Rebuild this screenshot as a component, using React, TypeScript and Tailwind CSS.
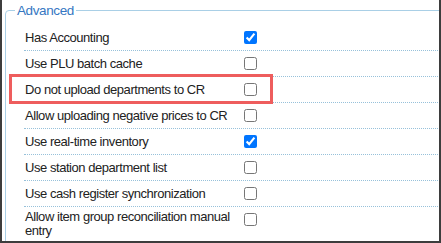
const rows = [
  { label: "Has Accounting", checked: true },
  { label: "Use PLU batch cache", checked: false },
  { label: "Do not upload departments to CR", checked: false, highlight: true },
  { label: "Allow uploading negative prices to CR", checked: false },
  { label: "Use real-time inventory", checked: true },
  { label: "Use station department list", checked: false },
  { label: "Use cash register synchronization", checked: false },
  { label: "Allow item group reconciliation manual entry", checked: false },
];

const App = () => {
  return (
    <div className="w-[441px] h-[243px] overflow-hidden bg-white border-x-2 border-b-2 border-[#3d3d3d] font-['Liberation_Sans',Arial,sans-serif] text-[13px] text-[#222]">
      <fieldset className="ml-[3px] mt-[3px] w-[470px] border border-[#a9cfe6] rounded-tl-[4px]">
        {/* Section title */}
        <legend className="ml-[9px] px-[2px] leading-[15px] text-[13.5px] tracking-[-0.4px] text-[#3577c2]">
          Advanced
        </legend>

        {/* Option rows */}
        <div className="pl-[18px] pt-[7px]">
          {rows.map((row) => (
            <div
              key={row.label}
              className="relative flex border-b border-dotted border-[#97c1da]"
            >
              {row.highlight && (
                <div className="absolute -left-[15px] -top-[3px] w-[264px] h-[30px] border-[3px] border-[#ee5d5d]" />
              )}
              <div className="w-[216px] self-center py-[3px] pl-[1px] leading-[14px] tracking-[-0.45px]">
                {row.label}
              </div>
              <div className="py-[3px]">
                <input
                  type="checkbox"
                  defaultChecked={row.checked}
                  className="block m-[3px] ml-[4px] w-[13px] h-[13px]"
                />
              </div>
            </div>
          ))}
        </div>
      </fieldset>
    </div>
  );
};

export default App;
